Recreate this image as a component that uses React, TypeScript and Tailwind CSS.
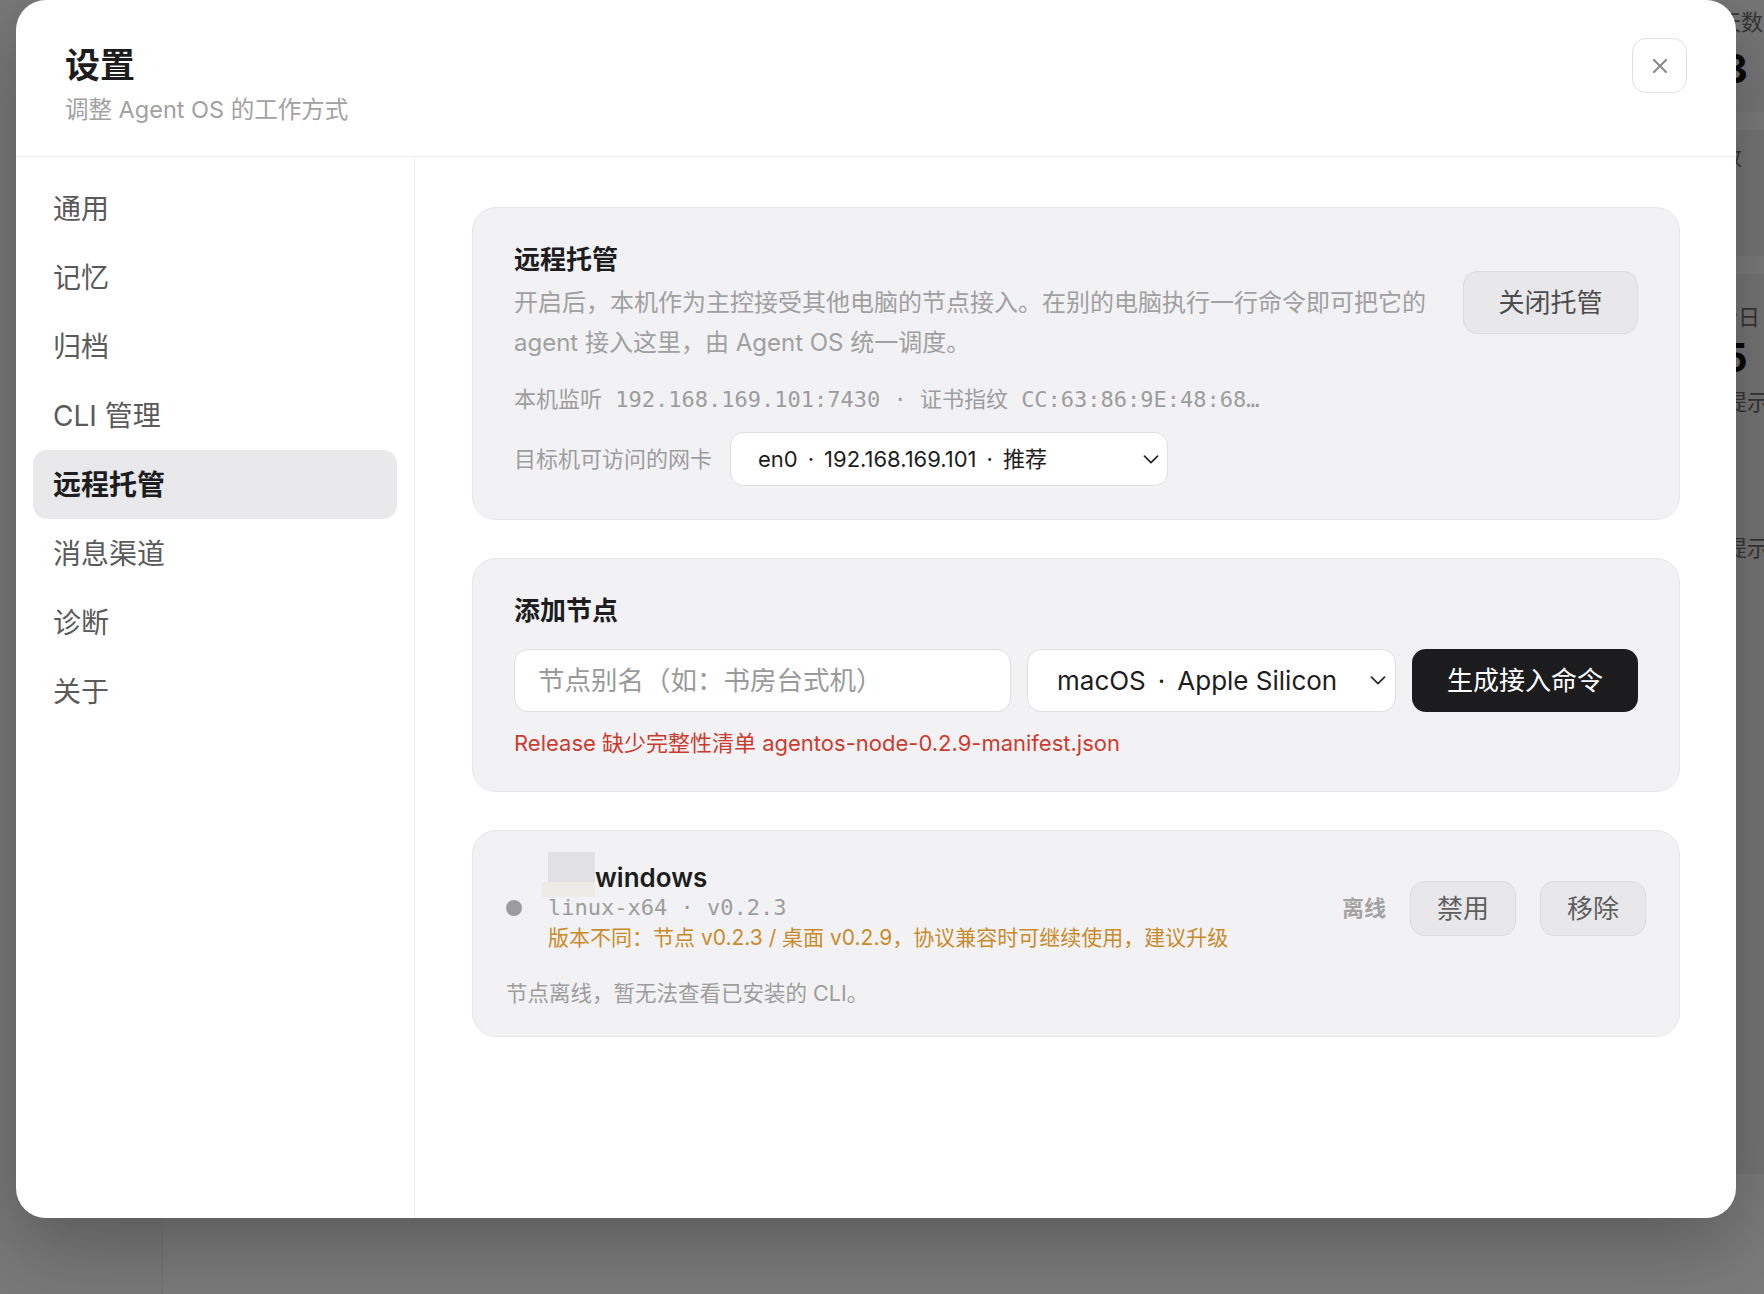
import React from "react";

const sans = "font-[Inter,'Noto_Sans_CJK_SC',sans-serif]";
const mono = "font-['DejaVu_Sans_Mono','Noto_Sans_CJK_SC',monospace]";

const navItems = ["通用", "记忆", "归档", "CLI 管理", "远程托管", "消息渠道", "诊断", "关于"];

function Chevron() {
  return (
    <svg width="16" height="9" viewBox="0 0 16 9" fill="none" className="shrink-0">
      <path d="M1.5 1.2 8 7.6l6.5-6.4" stroke="#2b2b2b" strokeWidth="1.8" strokeLinecap="round" strokeLinejoin="round" />
    </svg>
  );
}

function Dot({ className }: { className: string }) {
  return <span className={className}>·</span>;
}

// 被遮住的底层页面，只有右侧和底部露出一点
function BackdropPage() {
  return (
    <div className="flex h-full w-full">
      <aside className="w-[163px] shrink-0 border-r border-[#e4e4e4] bg-[#f3f3f3]" />
      <main className="flex flex-1 justify-end bg-[#f6f6f6]">
        <div className="flex w-[120px] shrink-0 flex-col gap-[18px] pl-[20px]">
          <div className="h-[112px] bg-[#ececec] pt-[6px]">
            <div className="whitespace-nowrap pl-[11px] text-[22px] leading-[32px] text-[#6a6a6a]">活跃天数</div>
            <div className="mt-[8px] whitespace-nowrap pl-[58px] text-[40px] font-bold leading-[46px] text-[#111]">3</div>
          </div>
          <div className="h-[126px] bg-[#eaeaea] pt-[11px]">
            <div className="whitespace-nowrap pl-[12px] text-[22px] leading-[32px] text-[#6a6a6a]">总次数</div>
          </div>
          <div className="h-[900px] bg-[#eaeaea] pt-[27px]">
            <div className="whitespace-nowrap pl-[52px] text-[22px] leading-[32px] text-[#6a6a6a]">今日</div>
            <div className="mt-[2px] whitespace-nowrap pl-[58px] text-[40px] font-bold leading-[46px] text-[#111]">5</div>
            <div className="mt-[5px] whitespace-nowrap pl-[61px] text-[22px] leading-[32px] text-[#6a6a6a]">提示</div>
            <div className="mt-[114px] whitespace-nowrap pl-[61px] text-[22px] leading-[32px] text-[#6a6a6a]">提示</div>
          </div>
        </div>
      </main>
    </div>
  );
}

export default function App() {
  return (
    <div className={`relative h-[1294px] w-full overflow-hidden ${sans}`}>
      <BackdropPage />
      <div className="absolute inset-0 bg-black/50">
        <div className="ml-[16px] flex h-[1218px] w-[1720px] flex-col overflow-hidden rounded-[30px] bg-white shadow-[0_24px_80px_rgba(0,0,0,0.28)]">
          {/* 顶部标题 */}
          <header className="flex h-[157px] shrink-0 items-start justify-between border-b border-[#ececec] pl-[49px] pr-[49px] pt-[38px]">
            <div className="mt-[4px]">
              <h1 className="text-[35px] font-bold leading-[46px] text-[#1d1d1f]">设置</h1>
              <p className="mt-[6px] text-[23.5px] leading-[32px] text-[#a1a1a1]">调整 Agent OS 的工作方式</p>
            </div>
            <button
              type="button"
              aria-label="关闭"
              className="flex h-[55px] w-[55px] items-center justify-center rounded-[14px] border-[1.5px] border-[#e0e0e0] bg-white"
            >
              <svg width="16" height="16" viewBox="0 0 16 16" fill="none">
                <path d="M2 2l12 12M14 2 2 14" stroke="#8c8c8c" strokeWidth="2.2" strokeLinecap="round" />
              </svg>
            </button>
          </header>

          <div className="flex min-h-0 flex-1">
            {/* 左侧菜单 */}
            <nav className="flex w-[399px] shrink-0 flex-col border-r border-[#ececec] px-[17px] pt-[17px]">
              {navItems.map((item) => {
                const active = item === "远程托管";
                return (
                  <div
                    key={item}
                    className={
                      active
                        ? "flex h-[69px] items-center rounded-[14px] bg-[#e9e9eb] pl-[20px] text-[28px] font-bold text-[#1d1d1f]"
                        : "flex h-[69px] items-center rounded-[14px] pl-[20px] text-[28px] text-[#5a5a5a]"
                    }
                  >
                    {item}
                  </div>
                );
              })}
            </nav>

            {/* 内容区 */}
            <section className="flex flex-1 flex-col gap-[38px] pl-[57px] pr-[56px] pt-[50px]">
              {/* 远程托管 */}
              <div className="rounded-[24px] border border-[#e6e6e8] bg-[#f2f2f4] px-[41px] pb-[33px] pt-[34px]">
                <div className="flex items-center gap-[28px]">
                  <div className="min-w-0 flex-1">
                    <h3 className="text-[26px] font-bold leading-[36px] text-[#1d1d1f]">远程托管</h3>
                    <p className="mt-[5px] text-[24px] leading-[40px] text-[#a0a0a0]">
                      开启后，本机作为主控接受其他电脑的节点接入。在别的电脑执行一行命令即可把它的 agent 接入这里，由 Agent OS 统一调度。
                    </p>
                  </div>
                  <button
                    type="button"
                    className="h-[63px] w-[175px] shrink-0 rounded-[14px] border border-[#dcdcde] bg-[#e8e8ea] text-[26px] text-[#4d4d4d]"
                  >
                    关闭托管
                  </button>
                </div>
                <div className={`mt-[22px] whitespace-nowrap text-[22px] leading-[30px] text-[#9d9d9d] ${mono}`}>
                  本机监听 192.168.169.101:7430 · 证书指纹 CC:63:86:9E:48:68…
                </div>
                <div className="mt-[17px] flex items-center gap-[18px]">
                  <span className="text-[22px] text-[#9d9d9d]">目标机可访问的网卡</span>
                  <button
                    type="button"
                    className="flex h-[54px] w-[438px] items-center justify-between rounded-[13px] border border-[#dedee0] bg-white pl-[27px] pr-[8px] text-[22px] text-[#1d1d1f]"
                  >
                    <span className="whitespace-nowrap">
                      en0<Dot className="mx-[10px]" />192.168.169.101<Dot className="mx-[10px]" />推荐
                    </span>
                    <Chevron />
                  </button>
                </div>
              </div>

              {/* 添加节点 */}
              <div className="rounded-[24px] border border-[#e6e6e8] bg-[#f2f2f4] px-[41px] pb-[32px] pt-[34px]">
                <h3 className="text-[26px] font-bold leading-[36px] text-[#1d1d1f]">添加节点</h3>
                <div className="mt-[20px] flex h-[63px] gap-4">
                  <input
                    className="min-w-0 flex-1 rounded-[14px] border border-[#dedee0] bg-white pl-[23px] text-[26.5px] text-[#1d1d1f] outline-none placeholder:text-[#9a9a9a]"
                    placeholder="节点别名（如：书房台式机）"
                  />
                  <button
                    type="button"
                    className="flex w-[369px] shrink-0 items-center justify-between rounded-[14px] border border-[#dedee0] bg-white pl-[29px] pr-[9px] text-[26px] text-[#1d1d1f]"
                  >
                    <span className="whitespace-nowrap">
                      macOS<Dot className="mx-[12px]" />Apple Silicon
                    </span>
                    <Chevron />
                  </button>
                  <button type="button" className="w-[226px] shrink-0 rounded-[14px] bg-[#1c1c1e] text-[26px] text-white">
                    生成接入命令
                  </button>
                </div>
                <p className="mt-[16px] text-[22px] leading-[31px] text-[#cc3b30]">
                  Release 缺少完整性清单 agentos-node-0.2.9-manifest.json
                </p>
              </div>

              {/* 节点 */}
              <div className="rounded-[24px] border border-[#e6e6e8] bg-[#f2f2f4] px-[33px] pb-[28px] pt-[31px]">
                <div className="flex items-center">
                  <span className="h-[16px] w-[16px] shrink-0 rounded-full bg-[#9c9c9e]" />
                  <div className="ml-[26px] min-w-0 flex-1">
                    <div className="flex h-[32px] items-start whitespace-nowrap text-[26px] font-semibold leading-[32px] text-[#1d1d1f]">
                      {/* 名称前缀被打码 */}
                      <span className="mt-[-10px] flex w-[47px] shrink-0 flex-col items-end">
                        <span className="h-[30px] w-[47px] bg-[#e1e1e3]" />
                        <span className="h-[15px] w-[53px] bg-[#eeebe6]" />
                      </span>
                      <span>windows</span>
                    </div>
                    <div className={`text-[22px] leading-[28px] text-[#9d9d9d] ${mono}`}>linux-x64 · v0.2.3</div>
                    <div className="text-[21px] leading-[32px] text-[#c98a2b]">
                      版本不同：节点 v0.2.3 / 桌面 v0.2.9，协议兼容时可继续使用，建议升级
                    </div>
                  </div>
                  <div className="flex items-center gap-[24px]">
                    <span className="text-[22px] font-semibold text-[#a3a3a3]">离线</span>
                    <button
                      type="button"
                      className="h-[55px] w-[106px] rounded-[14px] border border-[#dcdcde] bg-[#e8e8ea] text-[26px] text-[#5f5f5f]"
                    >
                      禁用
                    </button>
                    <button
                      type="button"
                      className="h-[55px] w-[106px] rounded-[14px] border border-[#dcdcde] bg-[#e8e8ea] text-[26px] text-[#5f5f5f]"
                    >
                      移除
                    </button>
                  </div>
                </div>
                <p className="mt-[24px] text-[21.5px] leading-[30px] text-[#9d9d9d]">节点离线，暂无法查看已安装的 CLI。</p>
              </div>
            </section>
          </div>
        </div>
      </div>
    </div>
  );
}
